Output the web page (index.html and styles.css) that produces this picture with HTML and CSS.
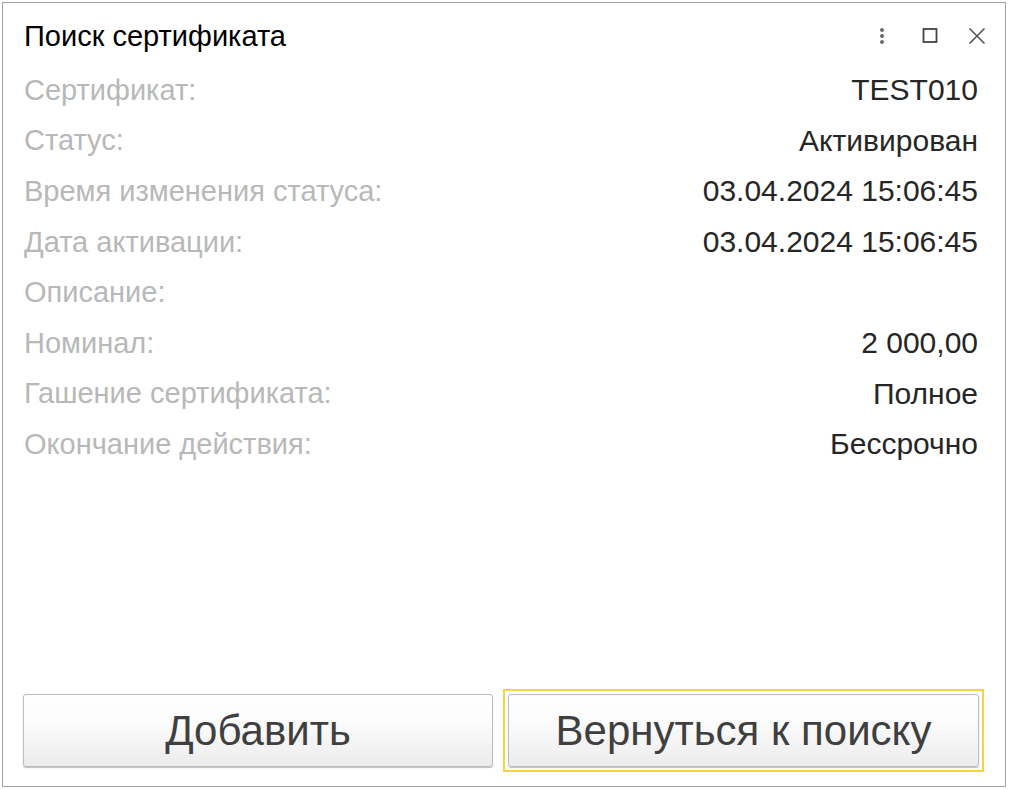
FILE: index.html
```html
<!DOCTYPE html>
<html lang="ru">
<head>
<meta charset="utf-8">
<title>Поиск сертификата</title>
<link rel="stylesheet" href="styles.css">
</head>
<body>
<div class="window">
  <div class="titlebar">
    <div class="title">Поиск сертификата</div>
    <div class="controls">
      <svg class="ico kebab" width="16" height="18" viewBox="0 0 16 18"><circle cx="8" cy="3" r="2" fill="#6a6a6a"/><circle cx="8" cy="9" r="2" fill="#6a6a6a"/><circle cx="8" cy="15" r="2" fill="#6a6a6a"/></svg>
      <svg class="ico" width="16" height="18" viewBox="0 0 16 18"><rect x="1.5" y="2" width="13" height="13" fill="none" stroke="#444" stroke-width="1.8"/></svg>
      <svg class="ico" width="18" height="18" viewBox="0 0 18 18"><path d="M1.5 1.5 L16.5 16.5 M16.5 1.5 L1.5 16.5" stroke="#555" stroke-width="1.6" fill="none"/></svg>
    </div>
  </div>
  <div class="fields">
    <div class="row"><span class="label">Сертификат:</span><span class="value">TEST010</span></div>
    <div class="row"><span class="label">Статус:</span><span class="value">Активирован</span></div>
    <div class="row"><span class="label">Время изменения статуса:</span><span class="value">03.04.2024 15:06:45</span></div>
    <div class="row"><span class="label">Дата активации:</span><span class="value">03.04.2024 15:06:45</span></div>
    <div class="row"><span class="label">Описание:</span><span class="value"></span></div>
    <div class="row"><span class="label">Номинал:</span><span class="value">2 000,00</span></div>
    <div class="row"><span class="label">Гашение сертификата:</span><span class="value">Полное</span></div>
    <div class="row"><span class="label">Окончание действия:</span><span class="value">Бессрочно</span></div>
  </div>
  <div class="spacer"></div>
  <div class="buttons">
    <div class="slot"><button class="btn">Добавить</button></div>
    <div class="slot focus-ring"><button class="btn">Вернуться к поиску</button></div>
  </div>
</div>
</body>
</html>
```
FILE: styles.css
```css
html, body {
  margin: 0;
  padding: 0;
  background: #fff;
}
body {
  font-family: "Liberation Sans", Arial, sans-serif;
}
.window {
  margin: 2px 0 0 2px;
  width: 1004px;
  height: 785px;
  box-sizing: border-box;
  border: 1px solid #a3a3a3;
  display: flex;
  flex-direction: column;
  background: #fff;
}
.titlebar {
  height: 62px;
  display: flex;
  align-items: center;
  justify-content: space-between;
  padding: 4px 19px 0 21px;
  box-sizing: border-box;
}
.title {
  font-size: 29px;
  color: #000;
}
.controls {
  display: flex;
  align-items: center;
  gap: 30px;
}
.kebab {
  margin-right: 2px;
}
.ico {
  display: block;
}
.fields {
  display: flex;
  flex-direction: column;
  padding: 0 27px 0 21px;
}
.row {
  height: 50.6px;
  display: flex;
  align-items: center;
  justify-content: space-between;
  font-size: 29px;
}
.label {
  color: #b8b8b8;
}
.value {
  color: #262626;
  font-size: 30px;
}
.spacer {
  flex: 1;
}
.buttons {
  display: grid;
  grid-template-columns: 480px 481px;
  gap: 5px;
  padding: 0 0 14px 15px;
}
.slot {
  padding: 3px;
  border: 2px solid transparent;
  display: flex;
}
.focus-ring {
  border-color: #f9d23e;
}
.btn {
  flex: 1;
  height: 73px;
  border: 1px solid #bcbcbc;
  border-radius: 3px;
  background: linear-gradient(#ffffff, #fbfbfb 40%, #ececec);
  box-shadow: 0 1px 1px rgba(0, 0, 0, 0.25);
  font-family: "Liberation Sans", Arial, sans-serif;
  font-size: 42px;
  color: #3f3f3f;
  padding: 0;
}
```
